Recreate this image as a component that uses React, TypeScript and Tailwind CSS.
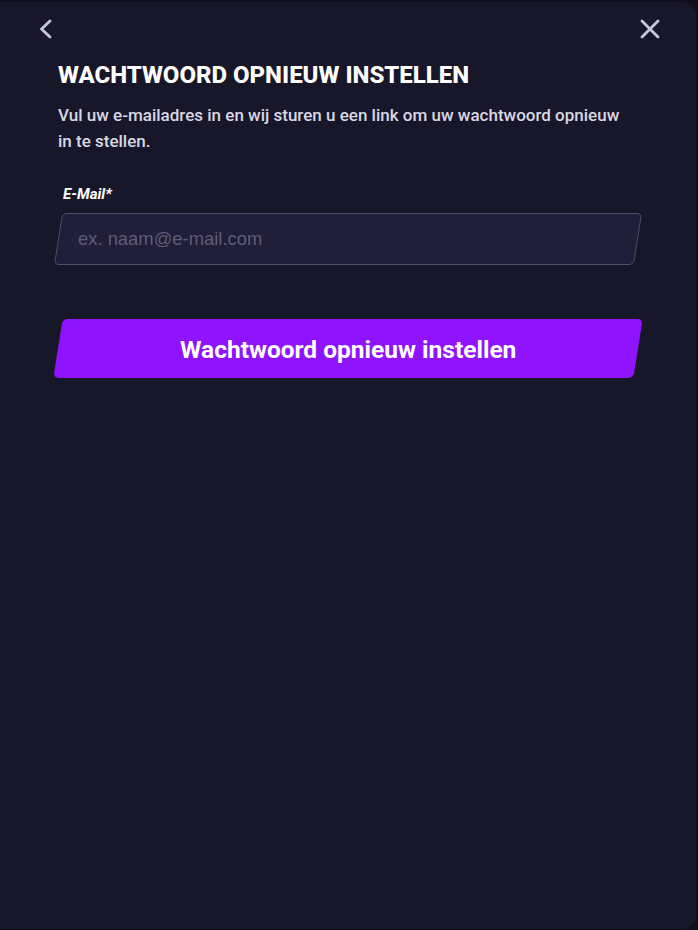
import { useState } from "react";

export default function App() {
  const [email, setEmail] = useState("");

  return (
    <div className="h-[930px] w-full bg-[#0f0e1b] pt-[2px] pr-[2px] pb-[1px] font-['Roboto',sans-serif]">
      <div className="flex h-full flex-col rounded-r-[14px] bg-[#181729]">
        {/* Top bar */}
        <div className="flex items-center justify-between pl-[36px] pr-[34px] pt-[15px]">
          <button className="text-[#c9c7dd]" aria-label="Terug">
            <svg width="18" height="22" viewBox="0 0 18 22" fill="none">
              <path d="M14 3 L5.5 11 L14 19" stroke="currentColor" strokeWidth="2.8" strokeLinecap="round" strokeLinejoin="round" />
            </svg>
          </button>
          <button className="text-[#c9c7dd]" aria-label="Sluiten">
            <svg width="24" height="24" viewBox="0 0 24 24" fill="none">
              <path d="M4 4 L20 20 M20 4 L4 20" stroke="currentColor" strokeWidth="2.8" strokeLinecap="round" />
            </svg>
          </button>
        </div>

        <div className="flex flex-col px-[58px]">
          <h1 className="mt-[20px] text-[24px] leading-[28px] font-extrabold text-white">
            WACHTWOORD OPNIEUW INSTELLEN
          </h1>
          <p className="mt-[13px] max-w-[572px] text-[17px] leading-[26px] font-medium text-[#d9d8e6]">
            Vul uw e-mailadres in en wij sturen u een link om uw wachtwoord opnieuw in te stellen.
          </p>

          <label className="mt-[31px] pl-[5px] text-[15px] leading-[18px] font-bold italic text-white">
            E-Mail*
          </label>
          <div className="mt-[10px] h-[52px] -skew-x-[9deg] rounded-[5px] border border-[#4e4c68] bg-[#201e38]">
            <input
              type="email"
              value={email}
              onChange={(e) => setEmail(e.target.value)}
              placeholder="ex. naam@e-mail.com"
              className="h-full w-full skew-x-[9deg] bg-transparent pl-[19px] pr-4 font-['Liberation_Sans',sans-serif] text-[18.4px] text-white placeholder-[#5e5c7c] outline-none"
            />
          </div>

          <button className="mt-[54px] flex h-[59px] -skew-x-[9deg] items-center justify-center rounded-[5px] bg-[#9013fe]">
            <span className="skew-x-[9deg] pt-[4px] text-[24.5px] font-bold text-white">
              Wachtwoord opnieuw instellen
            </span>
          </button>
        </div>
      </div>
    </div>
  );
}
